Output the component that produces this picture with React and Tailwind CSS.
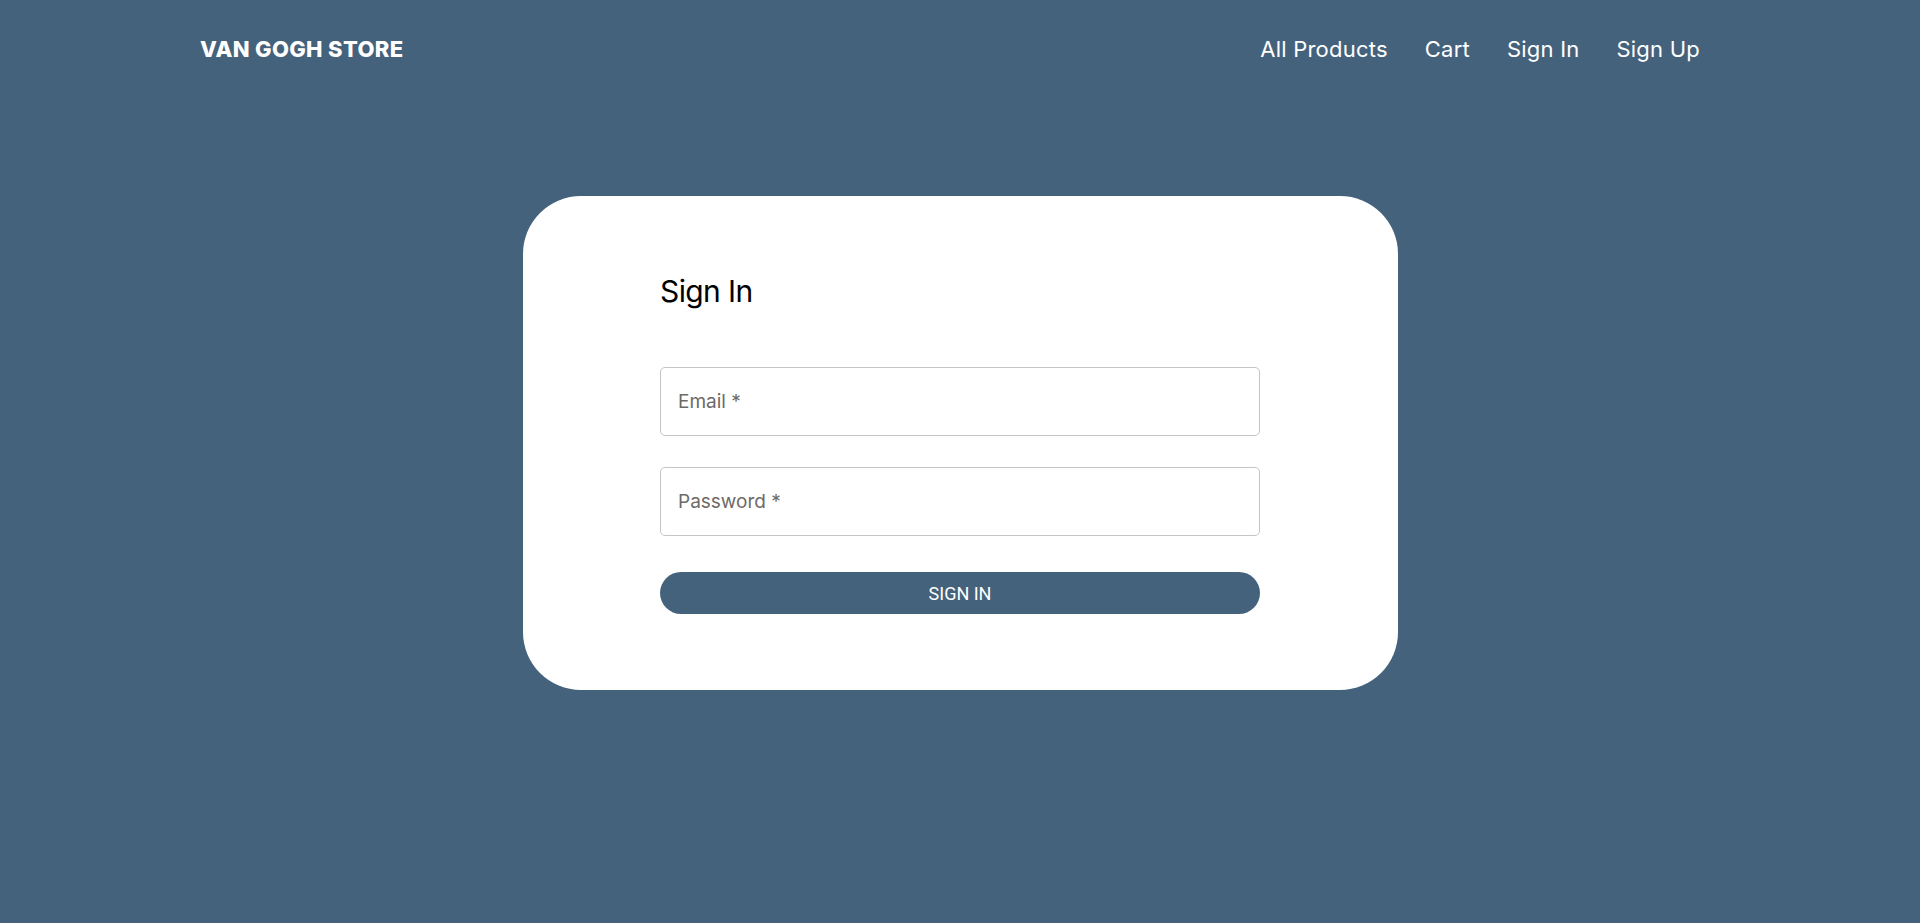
import React from 'react';

const NavLink = ({ children }) => (
    <a href="#" className="text-white text-[22px] tracking-[0.01em] leading-none">
        {children}
    </a>
);

const App = () => {
    return (
        <div className="min-h-screen w-full bg-[#45627c] font-['Inter','Liberation_Sans',sans-serif]">
            <header className="h-[98px] flex items-center justify-between pl-[200px] pr-[220px]">
                <a href="#" className="text-white text-[22px] font-extrabold tracking-[0.015em] leading-none">
                    VAN GOGH STORE
                </a>
                <nav className="flex items-center gap-[37px]">
                    <NavLink>All Products</NavLink>
                    <NavLink>Cart</NavLink>
                    <NavLink>Sign In</NavLink>
                    <NavLink>Sign Up</NavLink>
                </nav>
            </header>

            <main className="flex justify-center pt-[98px]">
                <div className="w-[875px] bg-white rounded-[58px] pt-[77px] pb-[76px]">
                    <div className="w-[600px] mx-auto">
                        <h1 className="text-[30px] leading-[36px] text-black font-normal tracking-[-0.02em]">Sign In</h1>

                        <form className="mt-[58px] flex flex-col" onSubmit={(e) => e.preventDefault()}>
                            <input
                                type="email"
                                placeholder="Email *"
                                className="h-[69px] w-full border border-[#c4c4c4] rounded-[5px] px-[17px] text-[19px] text-black placeholder:text-[#6e6a66] outline-none"
                            />
                            <input
                                type="password"
                                placeholder="Password *"
                                className="mt-[31px] h-[69px] w-full border border-[#c4c4c4] rounded-[5px] px-[17px] text-[19px] text-black placeholder:text-[#6e6a66] outline-none"
                            />
                            <button
                                type="submit"
                                className="mt-[36px] h-[42px] w-full rounded-full bg-[#45627c] text-white text-[18px] font-['Roboto','Liberation_Sans',sans-serif] uppercase"
                            >
                                Sign In
                            </button>
                        </form>
                    </div>
                </div>
            </main>
        </div>
    );
};

export default App;
